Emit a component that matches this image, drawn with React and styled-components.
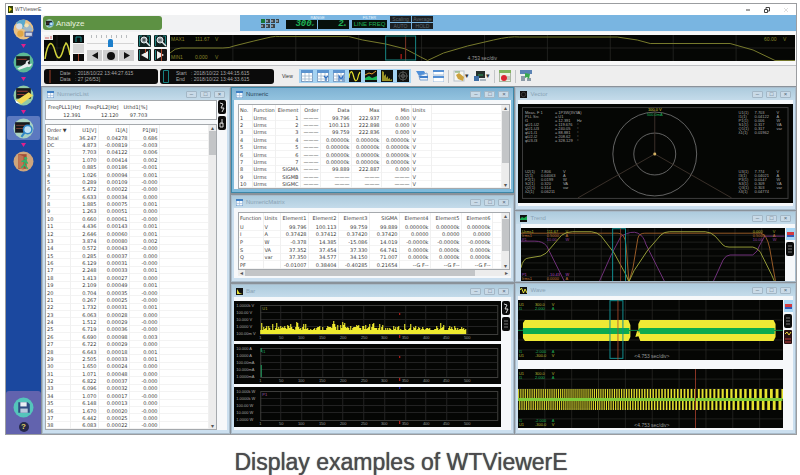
import React from 'react'
import styled, { createGlobalStyle, css } from 'styled-components'

const listRows = [
  ['Total', '36.247', '0.04278', '0.686'],
  ['DC', '4.873', '-0.00819', '-0.003'],
  ['1', '7.703', '0.04122', '0.006'],
  ['2', '1.070', '0.00414', '0.002'],
  ['3', '0.885', '0.00186', '-0.001'],
  ['4', '1.026', '0.00094', '0.001'],
  ['5', '0.289', '0.00109', '-0.000'],
  ['6', '5.472', '0.00022', '-0.000'],
  ['7', '6.633', '0.00034', '0.000'],
  ['8', '1.885', '0.00075', '0.001'],
  ['9', '1.263', '0.00051', '0.000'],
  ['10', '0.660', '0.00061', '-0.000'],
  ['11', '4.436', '0.00143', '0.001'],
  ['12', '2.646', '0.00060', '0.001'],
  ['13', '3.874', '0.00080', '0.002'],
  ['14', '0.572', '0.00043', '-0.000'],
  ['15', '0.285', '0.00037', '0.000'],
  ['16', '6.129', '0.00031', '-0.000'],
  ['17', '2.248', '0.00033', '0.001'],
  ['18', '1.413', '0.00027', '0.000'],
  ['19', '2.109', '0.00049', '0.001'],
  ['20', '0.704', '0.00035', '-0.000'],
  ['21', '0.267', '0.00025', '-0.000'],
  ['22', '1.732', '0.00031', '0.001'],
  ['23', '6.063', '0.00028', '0.000'],
  ['24', '1.512', '0.00029', '-0.000'],
  ['25', '6.719', '0.00036', '-0.000'],
  ['26', '6.690', '0.00098', '0.003'],
  ['27', '6.722', '0.00029', '0.000'],
  ['28', '6.643', '0.00018', '0.001'],
  ['29', '2.505', '0.00033', '0.001'],
  ['30', '1.650', '0.00024', '0.000'],
  ['31', '1.071', '0.00048', '0.000'],
  ['32', '6.822', '0.00037', '-0.000'],
  ['33', '6.096', '0.00032', '0.000'],
  ['34', '1.070', '0.00017', '-0.000'],
  ['35', '6.148', '0.00013', '0.000'],
  ['36', '1.670', '0.00020', '-0.000'],
  ['37', '6.442', '0.00025', '0.000'],
  ['38', '6.083', '0.00022', '-0.000'],
]

const dash = '———'
const zero = '0.00000k'
const numericRows = [
  ['1', 'Urms', '1', dash, '99.796', '222.937', '0.000', 'V'],
  ['2', 'Urms', '2', dash, '100.113', '222.898', '0.000', 'V'],
  ['3', 'Urms', '3', dash, '99.759', '222.836', '0.000', 'V'],
  ['4', 'Urms', '4', dash, zero, zero, zero, 'V'],
  ['5', 'Urms', '5', dash, zero, zero, zero, 'V'],
  ['6', 'Urms', '6', dash, zero, zero, zero, 'V'],
  ['7', 'Urms', '7', dash, zero, zero, zero, 'V'],
  ['8', 'Urms', 'SIGMA', dash, '99.889', '222.887', '0.000', 'V'],
  ['9', 'Urms', 'SIGMB', dash, dash, dash, dash, 'V'],
  ['10', 'Urms', 'SIGMC', dash, dash, dash, dash, 'V'],
]

const matrixRows = [
  ['U', 'V', '99.796', '100.113', '99.759', '99.889', zero, zero, zero],
  ['I', 'A', '0.37428', '0.37412', '0.37420', '0.37420', '0.0000', '0.0000', '0.0000'],
  ['P', 'W', '-0.378', '14.385', '-15.086', '14.019', '-0.0000k', '-0.0000k', '-0.0000k'],
  ['S', 'VA', '37.352', '37.454', '37.330', '64.741', '0.0000k', '0.0000k', '0.0000k'],
  ['Q', 'var', '37.350', '34.577', '34.150', '71.007', '0.0000k', '0.0000k', '0.0000k'],
  ['PF', '', '-0.01007', '0.38404', '-0.40285', '0.21654', '--G F--', '--G F--', '--G F--'],
]

/* ---------- small drawings ---------- */

const WindowIcon = ({ kind }) => {
  if (kind === 'table') {
    return (
      <svg width="7" height="7" viewBox="0 0 7 7">
        <rect width="7" height="7" fill="#f4f8fc" stroke="#5f92c8" />
        <rect width="7" height="2" fill="#3f7fc4" />
        <path d="M0 4.5h7M3.5 2v5" stroke="#9dbbd8" strokeWidth="0.6" />
      </svg>
    )
  }
  return (
    <svg width="7" height="7" viewBox="0 0 7 7">
      <rect width="7" height="7" fill="#111" />
      {kind === 'bar' && <path d="M1 1v5h5.500l-3-1z" fill="#e5e23a" />}
      {kind === 'trend' && <path d="M0 4l2-2 2 1 3-2v4H0z" fill="#17a84e" />}
      {kind === 'wave' && <path d="M0 3l1.500-2 2 5L5 2l2 4" stroke="#e5e23a" fill="none" />}
      {kind === 'vector' && <circle cx="3.500" cy="3.500" r="2.200" stroke="#666" fill="none" strokeWidth="0.500" />}
    </svg>
  )
}

const ViewIcon = ({ kind }) => (
  <svg width="12" height="12" viewBox="0 0 12 12">
    {kind.startsWith('table') ? (
      <>
        <rect x="0.500" y="0.500" width="11" height="11" fill="#fff" stroke="#7d9fc4" />
        <rect width="12" height="3" fill="#5c94cf" />
        <path d="M4 3v9M8 3v9M0 6h12M0 9h12" stroke="#9fb6cc" strokeWidth="0.800" />
        {kind === 'tableList' && <path d="M7 6l2 2 2-2M9 8v3" stroke="#2f6fc0" strokeWidth="1.300" fill="none" />}
        {kind === 'tableMatrix' && <path d="M6 11V6l2 3 2-3v5" stroke="#2f6fc0" strokeWidth="1.200" fill="none" />}
      </>
    ) : (
      <rect width="12" height="12" fill="#101210" />
    )}
    {kind === 'wave' && <path d="M0 8C1 0 3 0 4.500 6S8 13 9.500 5L11 2" stroke="#e6e02c" strokeWidth="1.200" fill="none" />}
    {kind === 'trend' && (
      <>
        <path d="M0 8l4-2 3 2 5-2v4H0z" fill="#18b555" />
        <path d="M0 5l4-2 3 1 4-3" stroke="#e6a02c" fill="none" />
      </>
    )}
    {kind === 'bar' && <path d="M1 1v10h10V9L9 10V8L7 9V6L5 8V4L3 6V2z" fill="#9c9326" />}
    {kind === 'vector' && (
      <g stroke="#666" strokeWidth="0.700" fill="none">
        <circle cx="6" cy="6" r="4" />
        <circle cx="6" cy="6" r="1.800" />
        <path d="M6 1v10M1 6h10" />
      </g>
    )}
  </svg>
)

const sideDrawings = {
  connect: (
    <>
      <circle cx="10" cy="10" r="9.500" fill="#e9c184" />
      <path d="M10 10L3 4a9 9 0 0 1 9-3z" fill="#58a9cf" />
      <path d="M9 8l7-3 3 5-5 4z" fill="#9fb8c9" />
      <circle cx="6" cy="7" r="3" fill="#d7dfe6" />
      <circle cx="7" cy="14" r="3" fill="#e0a645" />
      <circle cx="13" cy="6" r="2" fill="#f1e3b4" />
      <path d="M11 12h8v5h-8z" fill="#4a5a94" />
      <path d="M12 13h6v3h-6z" fill="#cbd5e8" />
    </>
  ),
  setting: (
    <>
      <circle cx="10" cy="10" r="9.500" fill="#5cb995" />
      <rect x="3" y="4" width="13" height="9" fill="#161a1c" />
      <path d="M4 7h9" stroke="#9b3d2d" />
      <path d="M4 16l8-5a3 3 0 0 1 4-3l-2 2 1 2 3-1a3 3 0 0 1-4 3l-8 3z" fill="#e8ecee" />
    </>
  ),
  measure: (
    <>
      <circle cx="10" cy="10" r="9.500" fill="#8fc9a6" />
      <rect x="3" y="3" width="14" height="10" fill="#17191c" />
      <path d="M4 6h10M4 9h7" stroke="#943c30" />
      <path d="M3 15L15 7l4 3-11 8z" fill="#f3db57" />
      <path d="M2 14l5 4-4-1z" fill="#fff" />
    </>
  ),
  analyze: (
    <>
      <circle cx="10" cy="10" r="9.500" fill="#a9d2c2" />
      <rect x="2" y="4" width="14" height="10" fill="#17191c" />
      <path d="M3 7h10M3 10h7" stroke="#86483c" strokeWidth="0.800" />
      <circle cx="14" cy="11" r="4" fill="#c2e2f5" stroke="#3187c7" strokeWidth="1.500" />
      <path d="M11 14l-3 4" stroke="#3187c7" strokeWidth="2" />
    </>
  ),
  exit: (
    <>
      <circle cx="10" cy="10" r="9.500" fill="#cfa67c" />
      <path d="M5 3h8v14H5z" fill="#a14e36" />
      <path d="M5 3l5 2v13l-5-2z" fill="#bf7654" />
      <circle cx="12" cy="7" r="1.500" fill="#35b26a" />
      <path d="M8 10l4-1 2 3M12 9l-1 4 3 4M11 13l-3 3" stroke="#35b26a" strokeWidth="1.500" fill="none" />
    </>
  ),
  save: (
    <>
      <circle cx="10" cy="10" r="9.500" fill="#54c5bb" />
      <path d="M5 5h9l2 2v8H5z" fill="#2f4d82" />
      <rect x="7" y="5" width="6" height="4" fill="#e9eff4" />
      <rect x="7" y="11" width="7" height="4" fill="#b9cadd" />
    </>
  ),
}

const SideIcon = ({ kind }) => (
  <svg width="21" height="21" viewBox="0 0 20 20">{sideDrawings[kind]}</svg>
)

const PlayBack = () => (
  <svg width="26" height="26" viewBox="0 0 26 26">
    <rect width="26" height="26" fill="#080a08" />
    <path d="M0 13h26M13 0v26" stroke="#333" strokeWidth="0.500" />
    <path d="M1 24C4 5 8 5 11 16S17 24 20 12L22 8Q24 9 26 20" stroke="#d3d43c" strokeWidth="1.500" fill="none" />
    <rect width="9" height="5" fill="#eee" />
    <path d="M1 3h4M7 1v3" stroke="#c44" strokeWidth="0.800" />
  </svg>
)

const CursorSwitch = () => (
  <svg width="11" height="26" viewBox="0 0 11 26">
    <rect width="11" height="8" fill="#0b0f0f" />
    <path d="M3 7V2h5v5" stroke="#1b8f8f" fill="none" />
    <rect y="9" width="11" height="9" fill="#d6d6d6" />
    <rect y="19" width="11" height="7" fill="#0b0b0b" />
    <path d="M5.500 19v7" stroke="#a2452d" />
  </svg>
)

const ZoomGlyph = ({ plus }) => (
  <svg width="13" height="12" viewBox="0 0 13 12">
    <rect width="13" height="12" rx="1" fill="#10201f" />
    <path d="M1.500 11V1H4M9 1h2.500v10" stroke="#1c7f7c" fill="none" />
    <circle cx="6" cy="5" r="3" fill="#98a3a8" stroke="#e3e7ea" />
    <path d={plus ? 'M4.500 5h3M6 3.500v3' : 'M4.500 5h3'} stroke="#222" strokeWidth="0.800" />
    <path d="M8 7l4 4" stroke="#e3e7ea" strokeWidth="1.500" />
  </svg>
)

const JumpGlyph = ({ back }) => (
  <svg width="13" height="12" viewBox="0 0 13 12">
    <rect width="13" height="12" rx="1" fill="#151515" />
    <path d={back ? 'M10 2L3 6l7 4z' : 'M3 2l7 4-7 4z'} fill="#f0f0f0" />
    <path d={back ? 'M7.500 0v4' : 'M7.500 0v12'} stroke="#b04a2c" />
    <path d={back ? 'M1.500 1v10M11.500 1v10' : 'M1.500 1v10'} stroke="#1c7f7c" />
  </svg>
)

const FilterGlyph = ({ kind }) => (
  <svg width="8" height="14" viewBox="0 0 8 14">
    <rect width="8" height="14" rx="2" fill="#0c0c0c" />
    {kind === 'wrench' && <path d="M2 3l3 1-2 4h3l-2 4" stroke="#d9d9d9" fill="none" />}
    {kind === 'link' && <path d="M4 3v5M2 7h3v4H2z" stroke="#d9d9d9" fill="none" />}
    {kind === 'grid' && <path d="M2 4h4M2 7h4M2 10h4" stroke="#777" fill="none" />}
  </svg>
)

const FlagGlyph = () => (
  <svg width="9" height="12" viewBox="0 0 9 12">
    <rect width="9" height="12" fill="#a8d6f4" />
    <path d="M1 4h7v3H1z" fill="#d43a3f" />
    <path d="M1 7h7v2H1z" fill="#3559b5" />
  </svg>
)

/* ---------- charts ---------- */

const gridPath = (w, h, sx, sy) => {
  let d = ''
  for (let x = sx; x < w; x += sx) d += `M${x} 0v${h}`
  for (let y = sy; y < h; y += sy) d += `M0 ${y}h${w}`
  return d
}

const Grid = ({ w, h, sx, sy }) => (
  <path d={gridPath(w, h, sx, sy)} stroke="#2b2b29" strokeWidth="0.700" fill="none" />
)

const Overview = () => (
  <Chart viewBox="0 0 626 26" $h={26}>
    <Grid w={626} h={26} sx={63} sy={13} />
    <path
      d="M0 18Q5 13 11 13H53Q60 13 64 11L84 6 101 2Q106 1 110 1.500H179L193 5 216 9 236 14 251 22 258 25.500 274 18 298 11 324 5Q341 1 350 2H448L468 5 481 8.500H561L584 15 606 25.500H626"
      stroke="#777a2c" fill="none"
    />
    <path d="M236 0v26" stroke="#7c3527" />
    <path d="M231.500 19v5" stroke="#e0201c" />
    <rect x="216" y="1" width="30" height="24" stroke="#188583" fill="none" />
    <g fill="#858329" fontSize="5">
      <text x="1" y="6">MAX1</text><text x="25" y="6">111.67</text><text x="45" y="6">V</text>
      <text x="1" y="24">MIN1</text><text x="25" y="24">0.000</text><text x="45" y="24">V</text>
      <text x="595" y="6">60.00</text><text x="614" y="6">V</text>
    </g>
    <text x="298" y="25" fill="#999" fontSize="5">4.753 sec/div</text>
  </Chart>
)

// repeatable spectrum heights, swelling a few times across the plot
const spectrum = Array.from({ length: 206 }, (_, i) => {
  const n = Math.abs(Math.sin(i * 12.9898) * 43758.5453) % 1
  const swell = 0.6 + 0.4 * Math.sin(i / 5.5)
  return Math.round(4 + n * n * 10 * (0.4 + 0.6 * swell) * (i < 100 ? 1 : 0.7))
})

const BarPlot = ({ unit, labels, bars, edge, mark }) => (
  <Chart viewBox="0 0 267 40" $h={40}>
    <g transform="translate(26 4)">
      <path d="M20.500 0v29M41.500 0v29M62.500 0v29M82.500 0v29M103.500 0v29M124.500 0v29M145.500 0v29M165.500 0v29M186.500 0v29M207.500 0v29M0 7.500h237M0 14.500h237M0 21.500h237" stroke="#222" />
      <rect x="0.500" y="0.500" width="237" height="29" stroke="#3d3d3b" fill="none" />
      {bars && <path d={spectrum.map((v, i) => `M${i + 0.5} 29v-${v}`).join('')} stroke="#eeea2e" strokeWidth="1.100" />}
      {edge && <path d="M1 0v4M1 17v12" stroke={edge} />}
      <path d="M139.500 30v3" stroke="#e0201c" />
      <path d={mark === 'blue' ? 'M139.500 -4v2' : 'M139.500 8v2'} stroke={mark === 'blue' ? '#2525e0' : '#e0201c'} />
      <text x="2" y="5" fontSize="4" fill={unit.color}>{unit.text}</text>
      <g fontSize="4" fill="#999" textAnchor="middle">
        <text x="0" y="34">1</text>
        {[50, 100, 150, 200, 250, 300, 350, 400, 450, 500].map((v, i) => (
          <text key={v} x={Math.round(20.7 * (i + 1))} y="34">{v}</text>
        ))}
      </g>
    </g>
    <g fontSize="4" fill="#a5a5a5">
      {labels.map((l, i) => <text key={l + i} x="2" y={6 + i * 7}>{l}</text>)}
    </g>
  </Chart>
)

const VectorPlot = () => {
  const column = (x, y, rows, step) => rows.map((r, i) => (
    <g key={i}>
      <text x={x} y={y + i * 4}>{r[0]}</text>
      <text x={x + step} y={y + i * 4}>{r[1]}</text>
      <text x={x + step + 22} y={y + i * 4}>{r[2]}</text>
    </g>
  ))
  return (
    <Chart viewBox="0 0 275 99" $h={99}>
      <rect x="4.500" y="3.500" width="266" height="91" stroke="#3d3d3d" fill="none" />
      <circle cx="137" cy="50" r="42" stroke="#7a7a7a" fill="none" strokeWidth="0.800" />
      <circle cx="137" cy="50" r="21" stroke="#7a7a7a" fill="none" strokeWidth="0.800" />
      <path d="M137 50V6M137 50L60 94M137 50L214 94" stroke="#463a32" strokeWidth="0.800" fill="none" />
      <circle cx="137" cy="50" r="1.500" fill="#d2b064" />
      <text x="137" y="7" fontSize="4" fill="#d8cf3a" textAnchor="middle">100.0 V</text>
      <text x="137" y="12" fontSize="4" fill="#1db35b" textAnchor="middle">500.0mA</text>
      <g fontSize="4" fill="#a8a8a8">
        {column(7, 10, [
          ['Meas. F 1', '= 1P3W(3V3A)', ''], ['PLL Src', '= U1', ''], ['f1', '= 12.391', 'Hz'],
          ['φU1-U2', '= 119.676', '°'], ['φU1-U3', '= 240.05', '°'], ['φU1-I1', '= 88.881', '°'],
          ['φU2-I2', '= 208.62', '°'], ['φU3-I3', '= 328.129', '°'],
        ], 30)}
        {column(221, 10, [
          ['U1(1)', '7.703', 'V'], ['I1(1)', '0.04122', 'A'], ['P1(1)', '0.006', 'W'],
          ['S1(1)', '0.317', 'VA'], ['Q1(1)', '0.317', 'var'], ['λ1(1)', '0.01962', ''],
        ], 16)}
        {column(7, 69, [
          ['U2(1)', '7.806', 'V'], ['I2(1)', '0.04063', 'A'], ['P2(1)', '0.0199', 'W'],
          ['S2(1)', '0.320', 'VA'], ['Q2(1)', '0.314', 'var'], ['λ2(1)', '0.06211', ''],
        ], 16)}
        {column(221, 69, [
          ['U3(1)', '7.774', 'V'], ['I3(1)', '0.04021', 'A'], ['P3(1)', '0.0147', 'W'],
          ['S3(1)', '0.309', 'VA'], ['Q3(1)', '0.303', 'var'], ['λ3(1)', '0.04774', ''],
        ], 16)}
      </g>
    </Chart>
  )
}

const TrendPlot = () => (
  <Chart viewBox="0 0 266 53" $h={53}>
    <Grid w={266} h={54} sx={27} sy={7} />
    <path d="M0 13H14Q22 13 26 18L33 32 44 54M79 54L91 27 101 8Q112 2 118 5T126 16L138 40 145 54M194 54L204 32Q207 27 211 27H234Q239 24 241 17L246 8H266" stroke="#7c3587" fill="none" strokeWidth="0.900" />
    <path d="M0 5H98Q105 5 106 17L109 54 113 40 118 10Q119 5 125 5H242Q248 6 251 20L257 54" stroke="#a8642b" fill="none" strokeWidth="0.900" />
    <path d="M0 40Q2 30 8 30L20 28Q26 26 29 21L41 7Q46 3.500 52 3.500H71Q77 4 81 8L94 25 106 47 109 54 114 43 128 22 141 7Q144 3.500 150 3.500H186Q192 4 196 8L204 17Q206 19 210 19H234Q241 21 243 27L253 47 256 54" stroke="#a4ab3d" fill="none" strokeWidth="0.900" />
    <rect x="92.500" y="0.500" width="13" height="54" stroke="#138f91" fill="none" />
    <path d="M100.500 0v54" stroke="#913a2b" strokeWidth="0.800" />
    <g fontSize="4">
      <text x="1" y="5" fill="#b9b837">Urms1</text><text x="26" y="5" fill="#b9b837">111.67</text><text x="45" y="5" fill="#b9b837">V</text>
      <text x="1" y="9" fill="#c2763a">Irms1</text><text x="26" y="9" fill="#c2763a">0.5000</text><text x="45" y="9" fill="#c2763a">A</text>
      <text x="1" y="13" fill="#9445a0">P1</text><text x="26" y="13" fill="#9445a0">10.00</text><text x="45" y="13" fill="#9445a0">W</text>
      <text x="1" y="48" fill="#b04bc0">P1</text><text x="28" y="48" fill="#b04bc0">-10.43</text><text x="45" y="48" fill="#b04bc0">W</text>
      <text x="1" y="52" fill="#c2763a">Irms1</text><text x="26" y="52" fill="#c2763a">0.0000</text><text x="45" y="52" fill="#c2763a">A</text>
      <text x="234" y="5" fill="#b9b837">0.000</text><text x="254" y="5" fill="#b9b837">V</text>
      <text x="234" y="9" fill="#c2763a">0.5000</text><text x="254" y="9" fill="#c2763a">A</text>
      <text x="234" y="13" fill="#9445a0">10.00</text><text x="254" y="13" fill="#9445a0">W</text>
    </g>
  </Chart>
)

const WaveLabels = () => (
  <g fontSize="4">
    <g fill="#b9b837">
      <text x="1" y="6">U1</text><text x="17" y="6">300.0</text><text x="34" y="6">V</text>
      <text x="1" y="57">U1</text><text x="17" y="57">-300.0</text><text x="34" y="57">V</text>
    </g>
    <g fill="#1fb45a">
      <text x="1" y="10">I1</text><text x="17" y="10">2.000</text><text x="34" y="10">A</text>
      <text x="1" y="53">I1</text><text x="17" y="53">-2.000</text><text x="34" y="53">A</text>
    </g>
    <text x="117" y="58" fill="#999" fontSize="5">&lt;4.753 sec/div&gt;</text>
  </g>
)

const EnvelopePlot = () => (
  <Chart viewBox="0 0 266 60" $h={60}>
    <Grid w={266} h={60} sx={27} sy={10} />
    <path d="M5 23L7 20H111L113 25V37L111 41H7L5 38zM121 24L123 20H257L259 24V37L257 41H123L121 36zM118 37l2-7 2 6z" fill="#efe935" />
    <path d="M0 30.500h266" stroke="#0c7a3c" />
    <path d="M5 28h107v6H5zM121 29l2-1h135v6H123z" fill="#0cab4f" />
    <rect x="92.500" y="0.500" width="13" height="58" stroke="#138f91" fill="none" />
    <path d="M100.500 0v60" stroke="#b04a2c" strokeWidth="0.800" />
    <WaveLabels />
  </Chart>
)

// square-like carrier whose period widens towards the right
const carrier = (() => {
  let d = ''
  let x = 0
  let up = true
  while (x < 266) {
    const half = 0.9 + 2.1 * Math.pow(x / 266, 2)
    d += `M${x.toFixed(2)} 30V${up ? 20 : 41}h${half.toFixed(2)}V30z`
    x += half
    up = !up
  }
  return d
})()

const CarrierPlot = () => (
  <Chart viewBox="0 0 266 59" $h={59}>
    <Grid w={266} h={60} sx={27} sy={10} />
    <path d={carrier} fill="#e6e22f" />
    <path d="M0 30.500h266" stroke="#7ecb38" strokeWidth="3" />
    <path d="M178.500 0v60" stroke="#8a3424" />
    <WaveLabels />
  </Chart>
)

/* ---------- pieces ---------- */

const DataTable = ({ label, head, rows, widths, left, height, headHeight }) => (
  <Table aria-label={label} $h={height}>
    <colgroup>
      {widths.map((w, i) => <Col key={i} $w={w} />)}
      <col />
    </colgroup>
    <thead>
      <Row $h={headHeight}>
        {head.map((h, i) => <Head key={h} scope="col" $left={left.includes(i)}>{h}</Head>)}
        <Cell />
      </Row>
    </thead>
    <tbody>
      {rows.map((r) => (
        <Row key={r[0]}>
          {r.map((v, i) => <Cell key={i} $left={left.includes(i)}>{v}</Cell>)}
          <Cell />
        </Row>
      ))}
    </tbody>
  </Table>
)

const MdiWindow = ({ title, icon, active, grow, children }) => (
  <Win $active={active} $grow={grow}>
    <WinBar $active={active}>
      <WindowIcon kind={icon} />
      <WinTitle $active={active}>{title}</WinTitle>
      <WinButton aria-label={`Minimize ${title}`}>–</WinButton>
      <WinButton aria-label={`Maximize ${title}`}>□</WinButton>
      <WinButton aria-label={`Close ${title}`}>×</WinButton>
    </WinBar>
    {children}
  </Win>
)

const VScroll = ({ thumb }) => (
  <ScrollTrack>
    <ScrollArrow>▴</ScrollArrow>
    <ScrollThumb $size={thumb} />
    <ScrollArrow $end>▾</ScrollArrow>
  </ScrollTrack>
)

const views = ['table', 'tableList', 'tableMatrix', 'wave', 'trend', 'bar', 'vector']
const steps = ['connect', 'setting', 'measure', 'analyze', 'exit']

function App() {
  return (
    <Page>
      <Global />
      <Frame>
        <TitleBar>
          <svg width="5" height="7" viewBox="0 0 5 7">
            <rect width="5" height="7" fill="#34420f" />
            <path d="M1 1l3 2-3 3z" fill="#f2e321" />
          </svg>
          <AppName>WTViewerE</AppName>
          <FrameButton aria-label="Minimize">
            <svg width="6" height="6" viewBox="0 0 6 6"><path d="M1 3h4" stroke="#444" /></svg>
          </FrameButton>
          <FrameButton aria-label="Restore">
            <svg width="6" height="6" viewBox="0 0 6 6"><path d="M0.500 2.500h3v3h-3zM2 2V0.500h3.500V4H4" stroke="#444" fill="none" /></svg>
          </FrameButton>
          <FrameButton aria-label="Close">
            <svg width="6" height="6" viewBox="0 0 6 6"><path d="M1 1l4 4M5 1L1 5" stroke="#d0d0d0" strokeWidth="0.700" /></svg>
          </FrameButton>
        </TitleBar>
        <Body>
          <Side>
            {steps.map((s, i) => (
              <React.Fragment key={s}>
                {i > 0 && <Arrow viewBox="0 0 5 4"><path d="M0 0h5L2.500 4z" fill="#e0208c" /></Arrow>}
                <SideButton aria-label={s} $on={s === 'analyze'}><SideIcon kind={s} /></SideButton>
              </React.Fragment>
            ))}
            <SideFoot>
              <SideButton aria-label="save"><SideIcon kind="save" /></SideButton>
              <HelpButton aria-label="help">?</HelpButton>
            </SideFoot>
          </Side>
          <Main>
            <ModeRow>
              <ModeTitle>
                <svg width="9" height="9" viewBox="0 0 20 20">{sideDrawings.analyze}</svg>
                Analyze
              </ModeTitle>
              <StatusBar>
                <svg width="19" height="10" viewBox="0 0 19 10">
                  <rect width="4" height="4" fill="#187434" />
                  <path d="M5 0h4v4H5zM10 0h4v4h-4zM15 0h3v4h-3zM0 5h4v4H0zM5 5h4v4H5zM10 5h4v4h-4z" fill="#3c454a" />
                  <path d="M6 1v2M11 1v2M16 1v2M1 6v2M6 6v2M11 6v2" stroke="#d5dde2" />
                </svg>
                <Readout>
                  <ReadoutName>RANGE</ReadoutName>
                  <Digits>300<small>V</small></Digits>
                  <Digits>2<small>A</small></Digits>
                </Readout>
                <Readout $single>
                  <ReadoutName>FILTER</ReadoutName>
                  <Filter>LINE FREQ</Filter>
                </Readout>
                <Flags>
                  <Flag>Scaling</Flag><Flag>Average</Flag><Flag>AUTO</Flag><Flag>HOLD</Flag>
                </Flags>
              </StatusBar>
            </ModeRow>
            <NavRow>
              <PlayBack />
              <CursorSwitch />
              <Player>
                <Ticks />
                <Slider type="range" aria-label="Position" defaultValue="50" />
                <PlayerButtons>
                  <PlayButton aria-label="Reverse"><svg width="6" height="7"><path d="M6 0L0 3.500 6 7z" fill="#111" /></svg></PlayButton>
                  <PlayButton aria-label="Stop"><svg width="8" height="8"><circle cx="4" cy="4" r="4" fill="#111" /></svg></PlayButton>
                  <PlayButton aria-label="Forward"><svg width="6" height="7"><path d="M0 0l6 3.500L0 7z" fill="#111" /></svg></PlayButton>
                </PlayerButtons>
              </Player>
              <ZoomPad>
                <Bare aria-label="Zoom in"><ZoomGlyph plus /></Bare>
                <Bare aria-label="Zoom out"><ZoomGlyph /></Bare>
                <Bare aria-label="Previous"><JumpGlyph back /></Bare>
                <Bare aria-label="Next"><JumpGlyph /></Bare>
              </ZoomPad>
              <Grow><Overview /></Grow>
            </NavRow>
            <ToolRow>
              <Info>
                <svg width="6" height="13"><path d="M3 0v13" stroke="#a1412b" /></svg>
                <dl>
                  <dt>Date</dt><dd>: 2018/10/22 13:44:27.615</dd>
                  <dt>Data</dt><dd>: 27 [26/53]</dd>
                </dl>
              </Info>
              <Info>
                <svg width="6" height="13"><path d="M0.500 0.500h5v12h-5z" stroke="#178080" fill="none" /></svg>
                <dl>
                  <dt>Start</dt><dd>: 2018/10/22 13:44:15.615</dd>
                  <dt>End</dt><dd>: 2018/10/22 13:44:33.615</dd>
                </dl>
              </Info>
              <ViewLabel>View</ViewLabel>
              <ViewGroup>
                {views.map((v) => <Bare key={v} aria-label={v}><ViewIcon kind={v} /></Bare>)}
              </ViewGroup>
              <Tools>
                <Bare aria-label="Cascade">
                  <svg width="12" height="12"><path d="M0 1h8l3 5H3z" fill="#4f8fd8" /><path d="M3 6l8-3 1 7H4z" fill="#eef4fb" stroke="#7ba3d2" /><path d="M3 6h9v2H4z" fill="#3d7cc9" /></svg>
                </Bare>
                <Bare aria-label="Tile">
                  <svg width="11" height="12"><path d="M0 0h11v5H0zM0 7h11v5H0z" fill="#fff" stroke="#9dbbdc" /><path d="M0 0h11v2H0zM0 6h11v2H0z" fill="#5590d4" /></svg>
                </Bare>
                <Divider />
                <Bare aria-label="Colors">
                  <svg width="12" height="12"><rect x="1" y="1" width="10" height="10" fill="#f6f6f0" stroke="#b9c2cc" /><path d="M3 5l3-2 5 4-1 4-5-2z" fill="#cda23e" /><path d="M2 2h5" stroke="#6fa057" /></svg>
                  ▾
                </Bare>
                <Bare aria-label="Save image">
                  <svg width="12" height="12"><rect x="2" y="1" width="9" height="7" fill="#26302c" /><path d="M4 5h5" stroke="#2f9a58" /><path d="M0 6h5v5H0z" fill="#3f6ea5" /><path d="M6 9h6v2H6z" fill="#abb6c0" /></svg>
                  ▾
                </Bare>
                <Divider />
                <Bare aria-label="Record">
                  <svg width="12" height="12"><rect x="0.500" y="0.500" width="11" height="11" fill="#e9f1e4" stroke="#aab7a2" /><rect width="12" height="3" fill="#7fb25c" /><circle cx="5" cy="8" r="3" fill="#db2632" /><path d="M8 6h3v4H8z" fill="#c3c9be" /></svg>
                </Bare>
                <Divider />
                <Bare aria-label="Export">
                  <svg width="12" height="12"><rect width="12" height="4" fill="#5b83b4" /><path d="M1 6h4v5H1zM7 8h4v3H7z" fill="#8c9ba8" /><path d="M5 3l5 1-1 5-2-2-2 1z" fill="#39a94e" /></svg>
                </Bare>
              </Tools>
            </ToolRow>
            <Desktop>
              <MdiWindow title="NumericList" icon="table" grow>
                <Split>
                  <ListSide>
                    <Panel>
                      <Summary>
                        <div><dt>FreqPLL1[Hz]</dt><dd>12.391</dd></div>
                        <div><dt>FreqPLL2[Hz]</dt><dd>12.120</dd></div>
                        <div><dt>Uthd1[%]</dt><dd>97.703</dd></div>
                      </Summary>
                    </Panel>
                    <Panel $grow>
                      <DataTable
                        label="Numeric list" height={304} headHeight={9}
                        head={['Order ▼', 'U1[V]', 'I1[A]', 'P1[W]']}
                        rows={listRows} widths={[24, 28, 31, 30]} left={[0]}
                      />
                      <VScroll thumb="24px" />
                    </Panel>
                  </ListSide>
                  <SideStrip>
                    <Bare aria-label="Settings"><FilterGlyph kind="wrench" /></Bare>
                    <Bare aria-label="Link"><FilterGlyph kind="link" /></Bare>
                  </SideStrip>
                </Split>
              </MdiWindow>
              <Stack $gap={2}>
                <MdiWindow title="Numeric" icon="table" active>
                  <Inset>
                    <Panel>
                      <DataTable
                        label="Numeric" height={83} headHeight={9}
                        head={['No.', 'Function', 'Element', 'Order', 'Data', 'Max', 'Min', 'Units']}
                        rows={numericRows} widths={[13, 23, 25, 20, 31, 30, 30, 20]} left={[0, 1, 7]}
                      />
                      <VScroll thumb="52px" />
                    </Panel>
                  </Inset>
                </MdiWindow>
                <MdiWindow title="NumericMatrix" icon="table">
                  <Inset $low>
                    <Panel>
                      <DataTable
                        label="Numeric matrix" height={56} headHeight={10}
                        head={['Function', 'Units', 'Element1', 'Element2', 'Element3', 'SIGMA', 'Element4', 'Element5', 'Element6']}
                        rows={matrixRows} widths={[24, 17, 28, 30, 31, 30, 31, 31, 31]} left={[0, 1]}
                      />
                      <VScroll thumb="32px" />
                    </Panel>
                    <HScroll><ScrollArrow>◂</ScrollArrow><HThumb /><ScrollArrow $end>▸</ScrollArrow></HScroll>
                  </Inset>
                </MdiWindow>
                <MdiWindow title="Bar" icon="bar" grow>
                  <Split $plain>
                    <Plots>
                      <BarPlot bars unit={{ text: 'U1', color: '#a8a53a' }} labels={['1.0000k V', '100.00 V', '10.000 V', '1.0000 V', '100.00m V']} />
                      <BarPlot edge="#20a060" unit={{ text: 'I1', color: '#20a060' }} labels={['10.000 A', '1.0000 A', '100.00mA', '10.000mA', '1.0000mA']} />
                      <BarPlot mark="blue" unit={{ text: 'P1', color: '#a456a8' }} labels={['10.000k W', '1.0000k W', '100.00 W', '10.000 W', '1.0000 W']} />
                    </Plots>
                    <SideStrip>
                      <Bare aria-label="Settings"><FilterGlyph kind="wrench" /></Bare>
                      <Bare aria-label="Grid"><FilterGlyph kind="grid" /></Bare>
                    </SideStrip>
                  </Split>
                </MdiWindow>
              </Stack>
              <Stack $gap={1}>
                <MdiWindow title="Vector" icon="vector">
                  <Split $plain><Plots $low><VectorPlot /></Plots></Split>
                </MdiWindow>
                <MdiWindow title="Trend" icon="trend">
                  <Split $flush>
                    <Plots><TrendPlot /></Plots>
                    <SideStrip>
                      <Bare aria-label="Legend"><FlagGlyph /></Bare>
                      <Bare aria-label="Grid"><FilterGlyph kind="grid" /></Bare>
                    </SideStrip>
                  </Split>
                </MdiWindow>
                <MdiWindow title="Wave" icon="wave" grow>
                  <Split $plain>
                    <Plots $wide>
                      <EnvelopePlot />
                      <CarrierPlot />
                    </Plots>
                    <SideStrip>
                      <Bare aria-label="Legend"><FlagGlyph /></Bare>
                      <Bare aria-label="Grid"><FilterGlyph kind="grid" /></Bare>
                      <Bare aria-label="Zoom area">
                        <svg width="8" height="14"><rect width="8" height="14" rx="1" fill="#2a1414" /><path d="M1 4l2-2 2 3 2-3" stroke="#e6da3c" fill="none" /><path d="M1 9h6M1 12h6" stroke="#b83a3a" /></svg>
                      </Bare>
                    </SideStrip>
                  </Split>
                </MdiWindow>
              </Stack>
            </Desktop>
          </Main>
        </Body>
      </Frame>
      <Caption>Display examples of WTViewerE</Caption>
    </Page>
  )
}

export default App

const Global = createGlobalStyle`
  *{
    box-sizing:border-box;
  }
  body{
    margin:0;
    background-color:#fff;
    font-family:"Liberation Sans", Arial, sans-serif;
  }
  button{
    font-family:inherit;
    cursor:pointer;
  }
  svg{
    display:block;
    flex-shrink:0;
  }
  dl, dd{
    margin:0;
  }
`
const Page = styled.div`
  padding:3px 3px 0 5px;
`
const Frame = styled.div`
  border:1px solid #9b9da0;
  background-color:#f1f2f3;
  font-size:6px;
  line-height:7px;
`
const TitleBar = styled.header`
  display:flex;
  align-items:center;
  height:11px;
  padding:0 1px 0 2px;
  background-color:#fff;
`
const AppName = styled.span`
  flex:1;
  margin-left:2px;
  color:#555;
  font-size:5px;
`
const FrameButton = styled.button`
  display:flex;
  justify-content:center;
  width:19px;
  padding:0;
  border:none;
  background:none;
`
const Body = styled.div`
  display:flex;
`
const Side = styled.nav`
  display:flex;
  flex-direction:column;
  align-items:center;
  width:35px;
  padding-top:2px;
  background-color:#1b489f;
`
const SideButton = styled.button`
  display:flex;
  justify-content:center;
  align-items:center;
  width:33px;
  height:24px;
  padding:0;
  border:none;
  border-radius:2px;
  background-color:${(p) => (p.$on ? '#5c79c0' : 'transparent')};
`
const Arrow = styled.svg`
  width:5px;
  height:4px;
  margin:3px 0 2px;
`
const SideFoot = styled.div`
  display:flex;
  flex-direction:column;
  align-items:center;
  width:100%;
  height:43px;
  margin-top:auto;
  padding-top:4px;
  border-radius:3px 3px 0 0;
  background-color:#6263ae;
`
const HelpButton = styled.button`
  width:10px;
  height:10px;
  margin-top:3px;
  padding:0;
  border:none;
  border-radius:50%;
  background-color:#25284a;
  color:#e4d560;
  font-size:8px;
  font-weight:700;
  line-height:10px;
`
const Main = styled.main`
  display:flex;
  flex-direction:column;
  flex:1;
  min-width:0;
`
const ModeRow = styled.div`
  display:flex;
  height:17px;
  padding:0 0 1px 2px;
`
const ModeTitle = styled.h1`
  display:flex;
  align-items:center;
  gap:2px;
  width:119px;
  height:14px;
  margin:1px 78px 0 0;
  padding-left:2px;
  border-radius:3px;
  background-color:#5d9143;
  color:#e6f0df;
  font-size:8px;
  font-weight:400;
`
const StatusBar = styled.div`
  display:flex;
  flex:1;
  align-items:flex-end;
  gap:3px;
  padding:0 0 2px 21px;
  background-color:#79b5e1;
`
const Readout = styled.div`
  display:grid;
  grid-template-columns:${(p) => (p.$single ? '35px' : '31px 31px')};
  gap:0 1px;
  margin-left:${(p) => (p.$single ? '0' : '3px')};
  text-align:center;
`
const ReadoutName = styled.span`
  grid-column:1 / -1;
  color:#e8f4fc;
  font-size:4px;
  line-height:5px;
`
const Digits = styled.output`
  height:9px;
  padding-right:3px;
  background-color:#07110b;
  color:#1fb256;
  font:italic 700 9px/9px "Liberation Mono", monospace;
  text-align:right;
  small{
    font-size:4px;
  }
`
const Filter = styled.output`
  height:8px;
  margin-bottom:1px;
  background-color:#07110b;
  color:#1fb256;
  font-size:6px;
  line-height:8px;
  white-space:nowrap;
`
const Flags = styled.div`
  display:grid;
  grid-template-columns:21px 21px;
  gap:1px;
`
const Flag = styled.span`
  height:6px;
  background-color:#1b2024;
  color:#5e666c;
  font-size:5px;
  line-height:6px;
  text-align:center;
`
const NavRow = styled.div`
  display:flex;
  gap:3px;
  height:33px;
  padding:3px 1px 0 3px;
  background-color:#f8f8f8;
`
const Player = styled.div`
  width:47px;
`
const Ticks = styled.div`
  height:3px;
  margin:0 4px;
  background:repeating-linear-gradient(90deg, #b9bcbf 0 1px, transparent 1px 5px);
`
const Slider = styled.input`
  display:block;
  width:100%;
  height:10px;
  margin:0 0 2px;
  appearance:none;
  background:linear-gradient(#d4d4d4, #d4d4d4) 0 5px / 100% 1px no-repeat;
  &::-webkit-slider-thumb{
    appearance:none;
    width:5px;
    height:8px;
    border-radius:2px 2px 0 0;
    background-color:#1c7fcb;
  }
`
const PlayerButtons = styled.div`
  display:flex;
  gap:1px;
`
const PlayButton = styled.button`
  display:flex;
  justify-content:center;
  align-items:center;
  flex:1;
  height:11px;
  padding:0;
  border:none;
  background-color:#cfcfcf;
`
const ZoomPad = styled.div`
  display:grid;
  grid-template-columns:13px 13px;
  align-content:start;
  gap:2px 3px;
  margin-left:1px;
`
const Bare = styled.button`
  display:flex;
  align-items:center;
  padding:0;
  border:none;
  background:none;
  color:#333;
  font-size:7px;
`
const Grow = styled.div`
  flex:1;
  min-width:0;
`
const Chart = styled.svg`
  width:100%;
  height:${(p) => p.$h}px;
  background-color:#050604;
  font-family:"Liberation Sans", Arial, sans-serif;
`
const ToolRow = styled.div`
  display:flex;
  align-items:center;
  height:21px;
  padding-left:3px;
  border-top:1px solid #bfc1c4;
  background-color:#eeeeee;
`
const Info = styled.div`
  display:flex;
  align-items:center;
  gap:7px;
  width:114px;
  height:15px;
  margin-right:2px;
  padding-left:3px;
  border-radius:3px;
  background-color:#0b0b0b;
  color:#a8a8a8;
  font-size:5px;
  line-height:6px;
  dl{
    display:grid;
    grid-template-columns:15px auto;
  }
`
const ViewLabel = styled.span`
  margin:0 6px;
  color:#333;
  font-size:5px;
`
const ViewGroup = styled.div`
  display:flex;
  gap:4px;
  padding:1px 2px;
  background-color:#a5d3f2;
`
const Tools = styled.div`
  display:flex;
  align-items:center;
  gap:5px;
  margin-left:5px;
`
const Divider = styled.span`
  width:1px;
  height:13px;
  margin:0 -1px;
  background-color:#c3c5c8;
`
const Desktop = styled.div`
  display:grid;
  grid-template-columns:188px 284fr 281fr;
  gap:1px;
  padding:1px 0 0 1px;
  background-color:#8a929a;
`
const Stack = styled.div`
  display:flex;
  flex-direction:column;
  gap:${(p) => p.$gap}px;
  min-width:0;
`
const Win = styled.section`
  display:flex;
  flex-direction:column;
  min-width:0;
  padding:0 2px 3px;
  border:1px solid ${(p) => (p.$active ? '#3c87a8' : '#a9bccb')};
  background-color:${(p) => (p.$active ? '#7fbadb' : '#cbdfef')};
  ${(p) => p.$grow && css`
    flex:1;
  `}
`
const WinBar = styled.header`
  display:flex;
  align-items:center;
  gap:3px;
  height:12px;
  margin:0 -2px;
  padding:0 4px;
  background:${(p) => (p.$active ? 'linear-gradient(#7fb2d3, #93c3df)' : 'linear-gradient(#adcbdd, #c4dbea)')};
`
const WinTitle = styled.h2`
  flex:1;
  margin:0;
  color:${(p) => (p.$active ? '#27465a' : '#8aa3b5')};
  font-size:6px;
  font-weight:400;
`
const WinButton = styled.button`
  width:11px;
  height:7px;
  padding:0;
  border:1px solid #a3b7c6;
  border-radius:1px;
  background-color:#c9dae7;
  color:#4f6474;
  font-size:6px;
  line-height:5px;
`
const Split = styled.div`
  display:flex;
  flex:1;
  padding-top:${(p) => (p.$plain || p.$flush ? '4px' : '0')};
  background-color:#f6f8fa;
  margin-bottom:${(p) => (p.$flush ? '-3px' : '0')};
  margin-left:${(p) => (p.$flush ? '3px' : '0')};
  margin-right:${(p) => (p.$flush ? '-2px' : '0')};
`
const ListSide = styled.div`
  display:flex;
  flex-direction:column;
  flex:1;
  gap:4px;
`
const SideStrip = styled.div`
  display:flex;
  flex-direction:column;
  gap:2px;
  width:10px;
  padding-left:1px;
`
const Panel = styled.div`
  display:flex;
  flex:${(p) => (p.$grow ? '1' : 'none')};
  overflow:hidden;
  border:1px solid #a5a9ad;
  background-color:#fff;
`
const Inset = styled.div`
  padding:4px 1px ${(p) => (p.$low ? '2px' : '0')} 4px;
  background-color:#f6f8fa;
`
const Summary = styled.dl`
  display:flex;
  gap:5px;
  height:18px;
  padding:2px 2px 0;
  color:#3c3c3c;
  font:5px/8px "DejaVu Sans", sans-serif;
  div{
    text-align:right;
  }
`
const Table = styled.table`
  flex:1;
  width:0;
  height:${(p) => p.$h}px;
  table-layout:fixed;
  border-collapse:collapse;
  color:#3c3c3c;
  font:5px/6px "DejaVu Sans", sans-serif;
`
const Col = styled.col`
  width:${(p) => p.$w}px;
`
const Row = styled.tr`
  height:${(p) => p.$h || 7}px;
`
const cellStyle = css`
  padding:0 1px;
  overflow:hidden;
  border-right:1px solid #f0f0f0;
  font-weight:400;
  text-align:${(p) => (p.$left ? 'left' : 'right')};
  white-space:nowrap;
`
const Head = styled.th`
  ${cellStyle}
`
const Cell = styled.td`
  ${cellStyle}
  box-shadow:inset 0 -1px #f3f3f3;
`
const ScrollTrack = styled.div`
  display:flex;
  flex-direction:column;
  width:7px;
  background-color:#ececec;
`
const ScrollThumb = styled.div`
  height:${(p) => p.$size};
  background-color:#c3c5c7;
`
const ScrollArrow = styled.span`
  width:7px;
  height:6px;
  color:#555;
  font-size:6px;
  line-height:6px;
  text-align:center;
  ${(p) => p.$end && css`
    margin-top:auto;
    margin-left:auto;
  `}
`
const HScroll = styled.div`
  display:flex;
  height:6px;
  background-color:#ececec;
`
const HThumb = styled.div`
  flex:0 1 230px;
  background-color:#c3c5c7;
`
const Plots = styled.div`
  display:flex;
  flex-direction:column;
  flex:1;
  gap:${(p) => (p.$wide ? '9px' : '3px')};
  min-width:0;
  padding-bottom:${(p) => (p.$low ? '3px' : '0')};
`
const Caption = styled.p`
  margin:14px 0 0;
  color:#4b4b4d;
  font-size:23px;
  font-weight:400;
  line-height:26px;
  text-align:center;
  text-shadow:0 0 1px #4b4b4d;
`
